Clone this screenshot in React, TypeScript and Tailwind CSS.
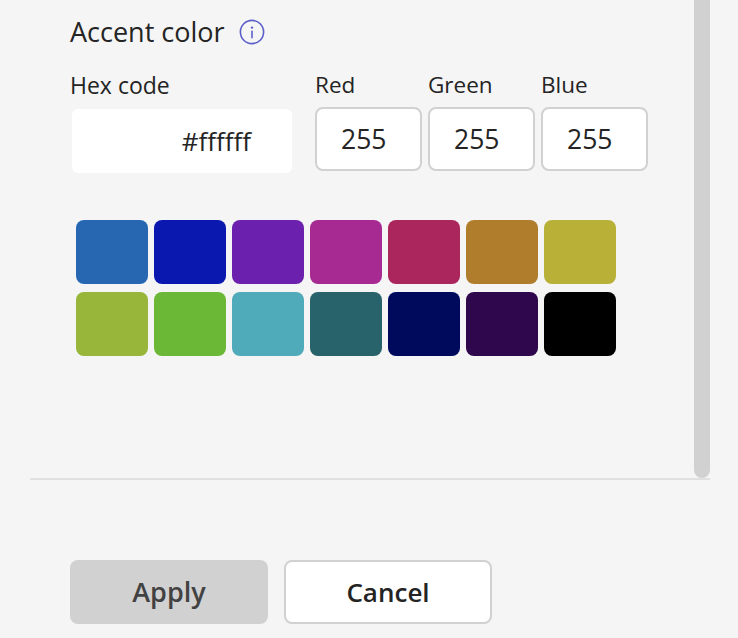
const swatches = [
  "bg-[#2767b2]",
  "bg-[#0a18b0]",
  "bg-[#6c21ae]",
  "bg-[#a62a92]",
  "bg-[#ab265c]",
  "bg-[#b07d2c]",
  "bg-[#b9b038]",
  "bg-[#97b63a]",
  "bg-[#6bb736]",
  "bg-[#4faab9]",
  "bg-[#28626a]",
  "bg-[#000a5c]",
  "bg-[#2f074c]",
  "bg-[#000000]",
];

function InfoIcon() {
  return (
    <svg width="26" height="26" viewBox="0 0 26 26" fill="none">
      <circle cx="13" cy="13" r="11.6" stroke="#5b5fc7" strokeWidth="1.6" />
      <circle cx="13" cy="8.6" r="1.2" fill="#5b5fc7" />
      <rect x="12.2" y="11.6" width="1.6" height="8" rx="0.8" fill="#5b5fc7" />
    </svg>
  );
}

function RgbField({ label }: { label: string }) {
  return (
    <div className="flex w-[107px] flex-col">
      <span className="text-[22.5px] leading-[32px]">{label}</span>
      <div className="mt-[6px] flex h-[64px] items-center rounded-lg border-2 border-[#d1d1d1] bg-white pl-[24px] pt-[2px] text-[26.5px]">
        255
      </div>
    </div>
  );
}

export default function App() {
  return (
    <div className="h-[638px] w-[738px] overflow-hidden bg-[#f5f5f5] font-['Open_Sans',sans-serif] text-[#242424]">
      <div className="ml-[30px] mr-[28px] flex h-[480px] justify-between border-b-2 border-[#e0e0e0] pl-[40px]">
        <div className="flex flex-col">
          <div className="mt-[12px] flex h-[40px] items-center gap-[14px]">
            <span className="text-[27px]">Accent color</span>
            <InfoIcon />
          </div>
          <div className="mt-[17px] flex gap-[23px]">
            <div className="flex w-[222px] flex-col">
              <span className="text-[23px] leading-[32px]">Hex code</span>
              <div className="ml-[2px] mt-[8px] flex h-[64px] items-center justify-end rounded-md bg-white pr-[41px] text-[26px]">
                #ffffff
              </div>
            </div>
            <div className="flex gap-[6px]">
              <RgbField label="Red" />
              <RgbField label="Green" />
              <RgbField label="Blue" />
            </div>
          </div>
          <div className="ml-[6px] mt-[47px] grid w-[540px] grid-cols-[repeat(7,72px)] gap-x-[6px] gap-y-[8px]">
            {swatches.map((color) => (
              <div key={color} className={`h-[64px] rounded-lg ${color}`} />
            ))}
          </div>
        </div>
        <div className="w-[16px] rounded-b-lg bg-[#d1d1d1]" />
      </div>
      <div className="ml-[70px] mt-[80px] flex gap-[16px]">
        <button className="h-[64px] w-[198px] rounded-lg bg-[#d1d1d1] text-[27px] font-semibold text-[#424242]">
          Apply
        </button>
        <button className="h-[64px] w-[208px] rounded-lg border-2 border-[#d1d1d1] bg-white text-[26px] font-semibold">
          Cancel
        </button>
      </div>
    </div>
  );
}
